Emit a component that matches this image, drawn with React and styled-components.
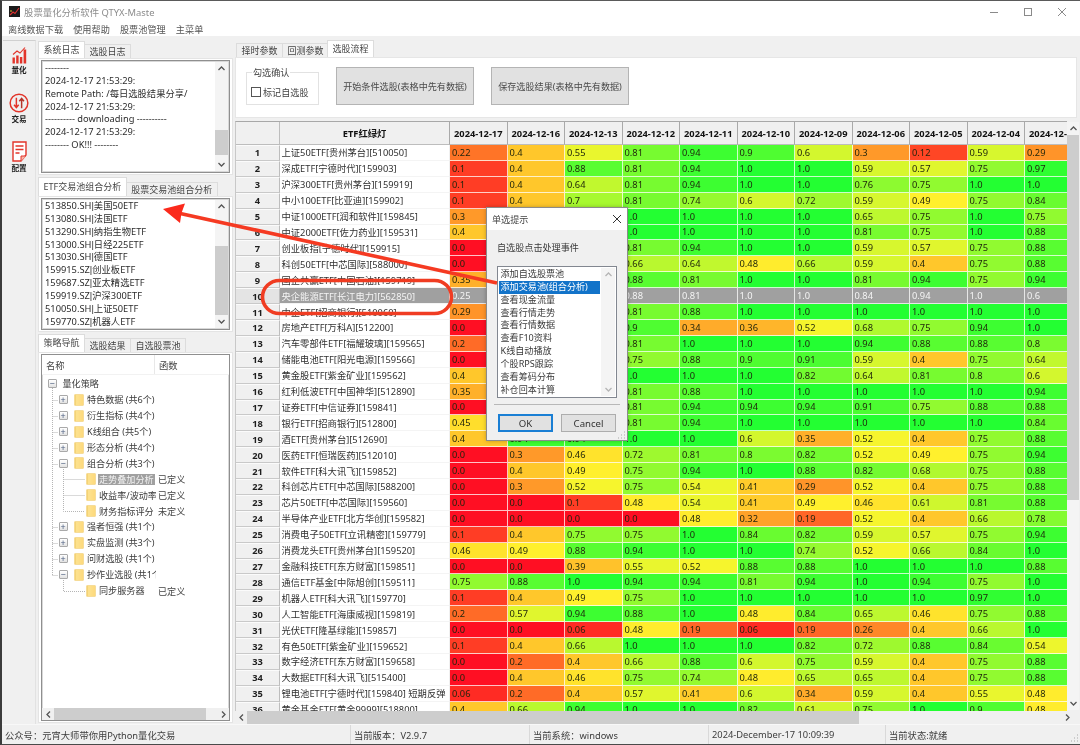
import React from 'react';
import styled, { createGlobalStyle } from 'styled-components';

const Global = createGlobalStyle`
  html, body { margin: 0; padding: 0; background: #f0f0f0; overflow: hidden; }
  * { box-sizing: border-box; }
  body { font-family: "Noto Sans", "Noto Sans CJK SC", sans-serif; font-size: 9.3px; color: #333; }
`;

const Win = styled.div`
  position: relative; width: 1080px; height: 745px; overflow: hidden; background: #f0f0f0;
  display: flex; flex-direction: column; filter: blur(.3px);
  border-top: 1px solid #5a5a5a; border-left: 2px solid #3c3c3c; border-bottom: 1px solid #4a4a4a;
`;
const TitleBar = styled.div`
  height: 20px; background: #fff; display: flex; align-items: center; padding: 1px 0 0 7px; flex: none;
`;
const TitleText = styled.span` margin-left: 4px; color: #8c8c8c; font-size: 9.4px; `;
const WinBtns = styled.div` margin-left: auto; margin-right: 1px; display: flex; color: #8a8a8a; `;
const WinBtn = styled.div` width: 34px; height: 20px; display: flex; align-items: center; justify-content: center; `;
const MenuBar = styled.div`
  height: 15px; background: #fff; flex: none; display: flex; align-items: center; padding-left: 6px; gap: 10px;
  font-size: 9.2px; color: #555;
`;
const Main = styled.div` flex: 1; min-height: 0; display: flex; padding-top: 4px; `;
const Side = styled.div`
  width: 33px; margin-left: 1px; flex: none; display: flex; flex-direction: column; align-items: center;
  border-top: 1px solid #d0d0d0; border-right: 1px solid #e2e2e2; padding-top: 6px; background: #f0f0f0;
`;
const SideItem = styled.div` display: flex; flex-direction: column; align-items: center; margin-bottom: ${p => p.$mb}px; `;
const SideLabel = styled.span` font-size: 7.6px; font-weight: 700; color: #222; margin-top: 2px; line-height: 9px; `;

const LeftCol = styled.div` width: 195px; margin-left: 2px; padding-top: 1px; flex: none; display: flex; flex-direction: column; `;
const RightCol = styled.div` flex: 1; min-width: 0; margin-left: 2px; display: flex; flex-direction: column; `;
const TabRow = styled.div`
  display: flex; align-items: flex-end; height: ${p => p.$h || 17}px; flex: none; margin-top: ${p => p.$mt || 0}px; margin-left: ${p => p.$ml || 0}px;
`;
const Tab = styled.div`
  height: ${p => (p.$on ? '100%' : '14px')}; padding: 0 4.5px; display: flex; align-items: center; font-size: 9px;
  background: ${p => (p.$on ? '#fff' : '#f0f0f0')}; color: #444;
  border: 1px solid #dcdcdc; border-bottom: none; margin-left: ${p => (p.$ml !== undefined ? p.$ml : p.$on ? 0 : -1)}px;
  padding-bottom: ${p => (p.$on ? 2 : 0)}px;
`;
const Pane = styled.div`
  background: #fff; border: 1px solid #e4e4e4; padding: 1px 2px; height: ${p => p.$h}px; flex: none; display: flex;
`;
const Sunken = styled.div`
  flex: 1; min-width: 0; display: flex; flex-direction: ${p => (p.$col ? 'column' : 'row')}; background: #fff;
  border: 1px solid #8f8f8f; box-shadow: inset 0 0 0 1px #d8d8d8;
`;
const Lines = styled.div` flex: 1; min-width: 0; padding: 1px 3px; color: #2c2c2c; white-space: pre; overflow: hidden; `;
const Line = styled.div` height: 12.85px; line-height: 12.85px; `;
const Pipe = styled.span` font-family: "Liberation Sans", sans-serif; `;

const VBar = styled.div`
  width: ${p => p.$w || 15}px; flex: none; display: flex; flex-direction: column; background: #f4f4f4; margin: 1px 1px 1px 0;
`;
const Arrow = styled.div` height: ${p => p.$s || 13}px; display: flex; align-items: center; justify-content: center; flex: none; `;
const Track = styled.div` flex: 1; min-height: 0; `;
const Thumb = styled.div` background: #cdcdcd; margin-top: ${p => p.$top}px; height: ${p => p.$h}px; `;
const HBar = styled.div` height: ${p => p.$h || 12}px; flex: none; display: flex; background: #f0f0f0; `;
const HArrow = styled.div` width: ${p => p.$w || 12}px; display: flex; align-items: center; justify-content: center; flex: none; `;
const HTrack = styled.div` flex: 1; min-width: 0; `;
const HThumb = styled.div` background: #cdcdcd; height: 100%; width: ${p => p.$w}px; `;

const Chev = ({ d = 'up', c = '#555' }) => {
  const r = { up: 0, right: 90, down: 180, left: 270 }[d];
  return (
    <svg width="9" height="9" viewBox="0 0 9 9" style={{ transform: `rotate(${r}deg)` }}>
      <path d="M1.5 6 L4.5 3 L7.5 6" fill="none" stroke={c} strokeWidth="1.3" />
    </svg>
  );
};
const VScroll = ({ top, h, w, s }) => (
  <VBar $w={w}>
    <Arrow $s={s}><Chev d="up" /></Arrow>
    <Track><Thumb $top={top} $h={h} /></Track>
    <Arrow $s={s}><Chev d="down" /></Arrow>
  </VBar>
);

/* Tree */
const TreeWrap = styled.div` flex: 1; min-height: 0; display: flex; flex-direction: column; position: relative; `;
const TreeHead = styled.div` height: 20px; flex: none; display: flex; align-items: center; background: #fff; color: #444; border-bottom: 1px solid #f2f2f2; `;
const HeadCell = styled.div` width: ${p => p.$w}px; padding-left: 4px; height: 100%; display: flex; align-items: center; border-right: ${p => (p.$b ? '1px solid #e8e8e8' : 'none')}; `;
const TreeBody = styled.div` flex: 1; min-height: 0; padding-top: 1px; position: relative; font-size: 9.1px; `;
const TRow = styled.div` height: 15.9px; display: flex; align-items: center; position: relative; color: #3a3a3a; `;
const TName = styled.div` width: 114px; flex: none; overflow: hidden; display: flex; align-items: center; padding-left: ${p => p.$pl}px; white-space: nowrap; height: 100%; `;
const TVal = styled.div` padding-left: 2px; color: #444; `;
const Expander = styled.div`
  width: 9px; height: 9px; flex: none; border: 1px solid #a9a9a9; border-radius: 1px; background: linear-gradient(#fff, #e2e2e2);
  display: flex; align-items: center; justify-content: center; margin-right: ${p => p.$mr}px; position: relative; z-index: 1;
  color: #4c5f80; font-size: 9px; line-height: 7px;
`;
const Folder = styled.div`
  width: 10px; height: 12px; flex: none; margin-right: 2px; background: linear-gradient(90deg, #f0cc6a 0, #fde28f 20%, #fdd97c 100%);
  border: 1px solid #f6dc98; border-radius: 1px; position: relative; z-index: 1;
`;
const TLabel = styled.span`
  background: ${p => (p.$sel ? '#a0a0a0' : 'transparent')}; color: ${p => (p.$sel ? '#f2f2f2' : 'inherit')};
  padding: 0 1px; line-height: 11px;
`;
const Guides = styled.svg` position: absolute; left: 0; top: 0; pointer-events: none; `;

/* Right top */
const FlowPane = styled.div`
  height: 61px; flex: none; background: #fff; border: 1px solid #e6e6e6; margin-right: 3px; display: flex; align-items: flex-end;
  padding: 0 0 12px 10px; font-size: 9.1px;
`;
const GroupBox = styled.div`
  width: 73px; height: 33px; border: 1px solid #e2e2e2; margin-right: 17px; position: relative; display: flex; align-items: center; padding: 6px 0 0 4px; color: #444; flex: none;
`;
const Legend = styled.span` position: absolute; left: 5px; top: -6px; background: #fff; padding: 0 1px; color: #444; line-height: 11px; `;
const Check = styled.div` width: 10px; height: 10px; border: 1px solid #555; background: #fff; margin-right: 2px; flex: none; `;
const BigBtn = styled.div`
  width: 138px; height: 38px; flex: none; background: #e1e1e1; border: 1px solid #b4b4b4; display: flex; align-items: center; justify-content: center; color: #4a4a4a; margin-right: 17px; padding-bottom: 1px;
`;

/* Table */
const TableArea = styled.div` flex: 1; min-height: 0; margin-top: 3px; display: flex; flex-direction: column; `;
const TableRow = styled.div` flex: 1; min-height: 0; display: flex; `;
const GridClip = styled.div` width: 832px; flex: none; overflow: hidden; border-top: 1px solid #a8a8a8; border-left: 1px solid #c8c8c8; background: #fff; `;
const Grid = styled.div`
  display: grid; grid-template-columns: 44px 170px repeat(11, 57.5px); grid-auto-rows: 15.92px; width: 846.5px;
  grid-template-rows: 23px;
`;
const Corner = styled.div` background: #f0f0f0; border-right: 1px solid #bdbdbd; border-bottom: 1px solid #bdbdbd; `;
const ColHead = styled.div`
  background: #f0f0f0; border-right: 1px solid #a9a9a9; border-bottom: 1px solid #bdbdbd; font-weight: 700; color: #111;
  display: flex; align-items: center; justify-content: center; white-space: nowrap; overflow: hidden;
`;
const RowHead = styled.div`
  background: ${p => (p.$sel ? '#e4e4e4' : '#f0f0f0')}; border-right: 1px solid #bdbdbd; border-bottom: 1px solid #c9c9c9; border-top: 1px solid #fbfbfb;
  font-weight: 700; color: #1e1e1e; display: flex; align-items: center; justify-content: center;
`;
const NameCell = styled.div`
  background: ${p => (p.$sel ? '#a0a0a0' : '#fff')}; color: ${p => (p.$sel ? '#f4f4f4' : '#303030')};
  display: flex; align-items: center; padding-left: 1.5px; white-space: nowrap; overflow: hidden; border-bottom: 1px solid #f4f4f4; border-right: 1px solid #f0f0f0;
`;
const Val = styled.div`
  display: flex; align-items: center; padding-left: 2px; color: ${p => (p.$sel ? '#f4f4f4' : '#1f240b')};
  border-right: 1px solid rgba(255,255,255,.75); border-bottom: 1px solid rgba(255,255,255,.75);
`;

/* Status */
const Status = styled.div`
  height: 20px; flex: none; display: grid; grid-template-columns: 349px 179px 179px 177px 1fr; background: #f0f0f0; border-top: 1px solid #f8f8f8; color: #3c3c3c; position: relative;
`;
const StatusCell = styled.div` display: flex; align-items: center; padding-left: 3px; border-right: ${p => (p.$last ? 'none' : '1px solid #d9d9d9')}; white-space: nowrap; `;

/* Dialog */
const Dialog = styled.div`
  position: absolute; left: 484px; top: 206px; width: 142px; height: 234px; background: #f0f0f0; border: 1px solid #8b8b8b;
  box-shadow: 0 0 4px rgba(0,0,0,.25); display: flex; flex-direction: column; color: #3a3a3a; z-index: 3; font-size: 9.1px;
`;
const DlgTitle = styled.div` height: 22px; flex: none; background: #fff; display: flex; align-items: center; justify-content: space-between; padding: 0 5px; color: #444; `;
const DlgBody = styled.div` flex: 1; display: flex; flex-direction: column; padding: 0 10px; position: relative; `;
const DlgLabel = styled.div` margin-top: 12px; height: 12px; line-height: 12px; `;
const DlgList = styled.div` margin-top: 12px; height: 132px; border: 1px solid #828790; background: #fff; display: flex; `;
const DlgItems = styled.div` flex: 1; min-width: 0; padding: 1px; `;
const DlgItem = styled.div`
  height: 12.85px; line-height: 12.85px; padding-left: 1.5px; white-space: nowrap;
  background: ${p => (p.$sel ? '#1273c9' : 'transparent')}; color: ${p => (p.$sel ? '#fff' : '#3a3a3a')};
`;
const DlgRule = styled.div` height: 1px; background: #b8b8b8; margin: 6px -3px 0; `;
const DlgBtns = styled.div` display: flex; justify-content: flex-end; gap: 8px; margin-top: 9px; margin-right: 1px; `;
const DlgBtn = styled.div`
  width: 55px; height: 18px; display: flex; align-items: center; justify-content: center; background: #e1e1e1;
  border: ${p => (p.$def ? '2px solid #1a7fd4' : '1px solid #adadad')}; color: #333; font-size: 9.6px;
`;
const Overlay = styled.svg` position: absolute; left: -2px; top: -1px; z-index: 4; pointer-events: none; `;
const Grip = styled.svg` position: absolute; right: 1px; bottom: 1px; `;

const dates = ['2024-12-17','2024-12-16','2024-12-13','2024-12-12','2024-12-11','2024-12-10','2024-12-09','2024-12-06','2024-12-05','2024-12-04','2024-12-03'];
const rows = [
 ['上证50ETF[贵州茅台][510050]','0.22 0.4 0.55 0.81 0.94 0.9 0.6 0.3 0.12 0.59 0.29'],
 ['深成ETF[宁德时代][159903]','0.1 0.4 0.88 0.81 0.94 1.0 1.0 0.59 0.57 0.75 0.97'],
 ['沪深300ETF[贵州茅台][159919]','0.1 0.4 0.64 0.81 0.94 1.0 1.0 0.76 0.75 1.0 1.0'],
 ['中小100ETF[比亚迪][159902]','0.1 0.4 0.7 0.81 0.74 0.6 0.72 0.59 0.49 0.75 0.84'],
 ['中证1000ETF[润和软件][159845]','0.3 0.4 0.7 1.0 1.0 1.0 1.0 0.65 0.75 1.0 0.75'],
 ['中证2000ETF[佐力药业][159531]','0.4 0.4 0.7 1.0 1.0 1.0 1.0 0.81 0.75 1.0 0.88'],
 ['创业板指[宁德时代][159915]','0.0 0.4 0.7 0.81 0.94 1.0 1.0 0.59 0.57 0.75 0.88'],
 ['科创50ETF[中芯国际][588000]','0.0 0.4 0.7 0.66 0.64 0.48 0.66 0.59 0.4 0.75 0.88'],
 ['国企共赢ETF[中国石油][159719]','0.35 0.4 0.7 0.88 0.81 1.0 1.0 0.81 0.94 0.75 0.94'],
 ['央企能源ETF[长江电力][562850]','0.25 0.4 0.7 0.88 0.81 1.0 1.0 0.84 0.94 1.0 0.6'],
 ['中企ETF[招商银行][510060]','0.29 0.4 0.7 0.81 0.88 1.0 1.0 1.0 1.0 1.0 1.0'],
 ['房地产ETF[万科A][512200]','0.0 0.4 0.7 0.9 0.34 0.36 0.52 0.68 0.75 0.94 1.0'],
 ['汽车零部件ETF[福耀玻璃][159565]','0.2 0.4 0.7 0.81 1.0 1.0 1.0 0.94 0.88 0.88 0.8'],
 ['储能电池ETF[阳光电源][159566]','0.0 0.4 0.7 0.75 0.88 0.9 0.91 0.59 0.4 0.75 0.64'],
 ['黄金股ETF[紫金矿业][159562]','0.4 0.4 0.7 1.0 1.0 1.0 0.82 0.64 0.81 0.8 0.6'],
 ['红利低波ETF[中国神华][512890]','0.35 0.4 0.7 0.81 0.88 1.0 1.0 1.0 1.0 1.0 0.94'],
 ['证券ETF[中信证券][159841]','0.0 0.4 0.7 0.81 0.94 0.94 0.94 0.91 0.75 0.88 0.88'],
 ['银行ETF[招商银行][512800]','0.45 0.4 0.7 0.81 0.94 1.0 1.0 1.0 1.0 1.0 0.84'],
 ['酒ETF[贵州茅台][512690]','0.4 0.94 0.94 1.0 1.0 0.6 0.35 0.52 0.4 0.75 0.88'],
 ['医药ETF[恒瑞医药][512010]','0.0 0.3 0.46 0.72 0.81 0.8 0.82 0.52 0.49 0.75 0.94'],
 ['软件ETF[科大讯飞][159852]','0.0 0.4 0.49 0.75 0.94 1.0 0.88 0.82 0.68 0.75 0.88'],
 ['科创芯片ETF[中芯国际][588200]','0.0 0.3 0.52 0.75 0.54 0.41 0.29 0.52 0.4 0.75 0.88'],
 ['芯片50ETF[中芯国际][159560]','0.0 0.0 0.1 0.48 0.54 0.41 0.49 0.46 0.61 0.81 0.88'],
 ['半导体产业ETF[北方华创][159582]','0.0 0.0 0.0 0.0 0.48 0.32 0.19 0.52 0.4 0.66 0.78'],
 ['消费电子50ETF[立讯精密][159779]','0.1 0.4 0.75 0.75 1.0 0.84 0.82 0.59 0.57 0.75 0.94'],
 ['消费龙头ETF[贵州茅台][159520]','0.46 0.49 0.88 0.94 1.0 1.0 0.74 0.52 0.66 0.84 1.0'],
 ['金融科技ETF[东方财富][159851]','0.0 0.0 0.39 0.55 0.52 0.88 0.88 1.0 1.0 1.0 0.88'],
 ['通信ETF基金[中际旭创][159511]','0.75 0.88 1.0 0.94 0.94 0.81 0.94 1.0 0.94 0.75 1.0'],
 ['机器人ETF[科大讯飞][159770]','0.1 0.4 0.49 0.75 1.0 1.0 1.0 1.0 1.0 0.97 1.0'],
 ['人工智能ETF[海康威视][159819]','0.2 0.57 0.94 0.88 1.0 0.48 0.84 0.65 0.46 0.75 0.88'],
 ['光伏ETF[隆基绿能][159857]','0.0 0.0 0.06 0.48 0.19 0.06 0.19 0.26 0.4 0.66 1.0'],
 ['有色50ETF[紫金矿业][159652]','0.1 0.4 0.66 1.0 1.0 1.0 0.82 0.72 0.88 0.84 0.54'],
 ['数字经济ETF[东方财富][159658]','0.0 0.2 0.4 0.66 0.88 0.6 0.75 0.59 0.4 0.75 0.88'],
 ['大数据ETF[科大讯飞][515400]','0.0 0.4 0.46 0.75 0.74 0.48 0.65 0.65 0.4 0.75 0.88'],
 ['锂电池ETF[宁德时代][159840] 短期反弹','0.06 0.2 0.4 0.57 0.41 0.6 0.34 0.59 0.4 0.55 0.48'],
 ['黄金基金ETF[黄金9999][518800]','0.4 0.66 0.94 1.0 1.0 0.82 0.61 0.75 1.0 0.9 0.48'],
];
const color = (v) => {
  const mix = (a, b, t) => Math.round(a + (b - a) * t);
  if (v <= 0.5) { const t = v / 0.5; return `rgb(255,${mix(15, 245, t)},${mix(35, 45, t)})`; }
  const t = (v - 0.5) / 0.5; return `rgb(${mix(255, 35, t)},${mix(245, 255, t)},${mix(45, 50, t)})`;
};

const logLines = ['--------','2024-12-17 21:53:29:','Remote Path: /每日选股结果分享/','2024-12-17 21:53:29:','---------- downloading ----------','2024-12-17 21:53:29:','-------- OK!!! --------'];
const pool = [['513850.SH','美国50ETF'],['513080.SH','法国ETF'],['513290.SH','纳指生物ETF'],['513000.SH','日经225ETF'],['513030.SH','德国ETF'],['159915.SZ','创业板ETF'],['159687.SZ','亚太精选ETF'],['159919.SZ','沪深300ETF'],['510050.SH','上证50ETF'],['159770.SZ','机器人ETF']];
const choices = ['添加自选股票池','添加交易池(组合分析)','查看现金流量','查看行情走势','查看行情数据','查看F10资料','K线自动播放','个股RPS跟踪','查看筹码分布','补仓回本计算'];

const tree = [
  { l: 0, t: '量化策略', open: true },
  { l: 1, t: '特色数据 (共6个)' }, { l: 1, t: '衍生指标 (共4个)' }, { l: 1, t: 'K线组合 (共5个)' }, { l: 1, t: '形态分析 (共4个)' },
  { l: 1, t: '组合分析 (共3个)', open: true },
  { l: 2, t: '走势叠加分析', v: '已定义', sel: true }, { l: 2, t: '收益率/波动率', v: '已定义' }, { l: 2, t: '财务指标评分', v: '未定义' },
  { l: 1, t: '强者恒强 (共1个)' }, { l: 1, t: '实盘监测 (共3个)' }, { l: 1, t: '问财选股 (共1个)' },
  { l: 1, t: '抄作业选股 (共1个)', open: true },
  { l: 2, t: '同步服务器', v: '已定义' },
];
const TreeRowItem = ({ n }) => (
  <TRow>
    <TName $pl={n.l === 0 ? 5.5 : n.l === 1 ? 16.5 : 44}>
      {n.l < 2 && <Expander $mr={n.l === 0 ? 5 : 6.5}>{n.open ? '−' : '+'}</Expander>}
      {n.l > 0 && <Folder />}
      <TLabel $sel={n.sel}>{n.t}</TLabel>
    </TName>
    {n.v && <TVal>{n.v}</TVal>}
  </TRow>
);

const BarsIcon = () => (
  <svg width="15" height="17" viewBox="0 0 15 17">
    <path d="M0.5 10.5h2.4V16.5H.5zM4.2 8.5h2.4v8H4.2zM7.9 10h2.4v6.5H7.9zM11.6 2.5h2.6v14h-2.6z" fill="#e2342a" />
    <path d="M1 7.5 L5 4 L8 6 L13 .5" stroke="#e2342a" strokeWidth="1.1" fill="none" />
  </svg>
);
const TradeIcon = () => (
  <svg width="20" height="20" viewBox="0 0 19 19">
    <circle cx="9.5" cy="9.5" r="8.4" fill="none" stroke="#e2342a" strokeWidth="1.4" />
    <path d="M7 4.5v9M4.8 11.2 7 13.8l2.2-2.6" fill="none" stroke="#e2342a" strokeWidth="1.4" />
    <path d="M12 14.5v-9M9.8 7.8 12 5.2l2.2 2.6" fill="none" stroke="#b5352a" strokeWidth="1.4" />
  </svg>
);
const DocIcon = () => (
  <svg width="15" height="21" viewBox="0 0 15 21">
    <path d="M1 1h13v13l-5 6H1z" fill="#fff" stroke="#e2342a" strokeWidth="1.4" />
    <path d="M9 20v-5h5" fill="#f7b7aa" stroke="#e2342a" strokeWidth="1" />
    <path d="M3.5 5h8M3.5 8.5h8M3.5 12h4" stroke="#e2342a" strokeWidth="1.3" />
  </svg>
);
const AppIcon = () => (
  <svg width="11" height="11" viewBox="0 0 11 11">
    <rect width="11" height="11" fill="#1a1a1a" />
    <path d="M1 9 L4 6 L6 7.5 L10 2" stroke="#e03030" strokeWidth="1.1" fill="none" />
    <path d="M1 5h2" stroke="#e0c030" strokeWidth="1" />
  </svg>
);

export default function App() {
  return (
    <>
      <Global />
      <Win>
        <TitleBar>
          <AppIcon />
          <TitleText>股票量化分析软件 QTYX-Maste</TitleText>
          <WinBtns>
            <WinBtn><svg width="10" height="10"><path d="M1 5.5h8" stroke="#8a8a8a" /></svg></WinBtn>
            <WinBtn><svg width="10" height="10"><rect x="1.5" y="1.5" width="7" height="7" fill="none" stroke="#8a8a8a" /></svg></WinBtn>
            <WinBtn><svg width="10" height="10"><path d="M1 1l8 8M9 1l-8 8" stroke="#8a8a8a" /></svg></WinBtn>
          </WinBtns>
        </TitleBar>
        <MenuBar>
          <span>离线数据下载</span><span>使用帮助</span><span>股票池管理</span><span>主菜单</span>
        </MenuBar>
        <Main>
          <Side>
            <SideItem $mb={18}><BarsIcon /><SideLabel>量化</SideLabel></SideItem>
            <SideItem $mb={17}><TradeIcon /><SideLabel>交易</SideLabel></SideItem>
            <SideItem $mb={0}><DocIcon /><SideLabel>配置</SideLabel></SideItem>
          </Side>
          <LeftCol>
            <TabRow>
              <Tab $on>系统日志</Tab><Tab>选股日志</Tab>
            </TabRow>
            <Pane $h={117}>
              <Sunken>
                <Lines>{logLines.map((l, i) => <Line key={i}>{l}</Line>)}</Lines>
                <VScroll top={55} h={25} w={13} />
              </Sunken>
            </Pane>
            <TabRow $mt={2} $h={19}>
              <Tab $on>ETF交易池组合分析</Tab><Tab>股票交易池组合分析</Tab>
            </TabRow>
            <Pane $h={136}>
              <Sunken>
                <Lines>{pool.map(([a, b]) => <Line key={a}>{a}<Pipe>|</Pipe>{b}</Line>)}</Lines>
                <VScroll top={33} h={69} w={13} />
              </Sunken>
            </Pane>
            <TabRow $mt={2} $h={18}>
              <Tab $on>策略导航</Tab><Tab>选股结果</Tab><Tab>自选股票池</Tab>
            </TabRow>
            <Pane $h={371}>
              <Sunken $col>
                <TreeWrap>
                  <TreeHead>
                    <HeadCell $w={113} $b>名称</HeadCell>
                    <HeadCell $w={70}>函数</HeadCell>
                  </TreeHead>
                  <TreeBody>
                    <Guides width="130" height="230">
                      <path d="M10.5 13V200M10.5 25.5H16M10.5 41.5H16M10.5 57.5H16M10.5 73.5H16M10.5 89.5H16M10.5 152.5H16M10.5 168.5H16M10.5 184.5H16M10.5 200.5H16M21.5 94V136.5H43M21.5 104.5H43M21.5 120.5H43M21.5 205V216.5H43"
                        fill="none" stroke="#b5b5b5" strokeDasharray="1 1" />
                    </Guides>
                    {tree.map((n, i) => <TreeRowItem key={i} n={n} />)}
                  </TreeBody>
                  <HBar>
                    <HArrow><Chev d="left" /></HArrow>
                    <HTrack><HThumb $w={152} /></HTrack>
                    <HArrow><Chev d="right" /></HArrow>
                  </HBar>
                </TreeWrap>
              </Sunken>
            </Pane>
          </LeftCol>
          <RightCol>
            <TabRow $ml={2}>
              <Tab>择时参数</Tab><Tab>回测参数</Tab><Tab $on $ml={-2}>选股流程</Tab>
            </TabRow>
            <FlowPane>
              <GroupBox>
                <Legend>勾选确认</Legend>
                <Check /><span>标记自选股</span>
              </GroupBox>
              <BigBtn>开始条件选股(表格中先有数据)</BigBtn>
              <BigBtn>保存选股结果(表格中先有数据)</BigBtn>
            </FlowPane>
            <TableArea>
              <TableRow>
                <GridClip>
                  <Grid>
                    <Corner /><ColHead>ETF红绿灯</ColHead>
                    {dates.map(d => <ColHead key={d}>{d}</ColHead>)}
                    {rows.map(([name, vals], i) => (
                      <React.Fragment key={i}>
                        <RowHead $sel={i === 9}>{i + 1}</RowHead>
                        <NameCell $sel={i === 9}>{name}</NameCell>
                        {vals.split(' ').map((v, j) => (
                          <Val key={j} $sel={i === 9} style={{ background: i === 9 ? '#a0a0a0' : color(parseFloat(v)) }}>{v}</Val>
                        ))}
                      </React.Fragment>
                    ))}
                  </Grid>
                </GridClip>
                <VBar $w={12}>
                  <Arrow><Chev d="up" /></Arrow>
                  <Track><Thumb $top={0} $h={365} /></Track>
                  <Arrow><Chev d="down" /></Arrow>
                </VBar>
              </TableRow>
              <HBar $h={13}>
                <HArrow><Chev d="left" /></HArrow>
                <HTrack><HThumb $w={612} /></HTrack>
                <HArrow $w={26}><Chev d="right" /></HArrow>
              </HBar>
            </TableArea>
          </RightCol>
        </Main>
        <Status>
          <StatusCell>公众号：元宵大师带你用Python量化交易</StatusCell>
          <StatusCell>当前版本：V2.9.7</StatusCell>
          <StatusCell>当前系统：windows</StatusCell>
          <StatusCell>2024-December-17 10:09:39</StatusCell>
          <StatusCell $last>当前状态:就绪</StatusCell>
          <Grip width="10" height="10"><path d="M8.5 1.5v1M8.5 4.5v1M8.5 7.5v1M5.5 4.5v1M5.5 7.5v1M2.5 7.5v1" stroke="#a9a9a9" /></Grip>
        </Status>

        <Dialog>
          <DlgTitle>
            <span>单选提示</span>
            <svg width="10" height="10"><path d="M1 1l8 8M9 1l-8 8" stroke="#333" /></svg>
          </DlgTitle>
          <DlgBody>
            <DlgLabel>自选股点击处理事件</DlgLabel>
            <DlgList>
              <DlgItems>
                {choices.map((c, i) => <DlgItem key={c} $sel={i === 1}>{c}</DlgItem>)}
              </DlgItems>
              <VBar $w={14}>
                <Arrow><Chev d="up" c="#b5b5b5" /></Arrow>
                <Track />
                <Arrow><Chev d="down" c="#b5b5b5" /></Arrow>
              </VBar>
            </DlgList>
            <DlgRule />
            <DlgBtns>
              <DlgBtn $def>OK</DlgBtn>
              <DlgBtn>Cancel</DlgBtn>
            </DlgBtns>
            <Grip width="9" height="9"><path d="M7.5 1.5v1M7.5 4.5v1M7.5 7.5v1M4.5 4.5v1M4.5 7.5v1M1.5 7.5v1" stroke="#a9a9a9" /></Grip>
          </DlgBody>
        </Dialog>

        <Overlay width="1080" height="745">
          <rect x="262.5" y="280.5" width="189" height="33" rx="17" fill="none" stroke="#f03c22" strokeWidth="3.6" />
          <path d="M178 213 L497 283" stroke="#f53a22" strokeWidth="3.6" fill="none" />
          <polygon points="163,209 185,203.5 181.5,213 180,223" fill="#fb2a1c" />
        </Overlay>
      </Win>
    </>
  );
}
